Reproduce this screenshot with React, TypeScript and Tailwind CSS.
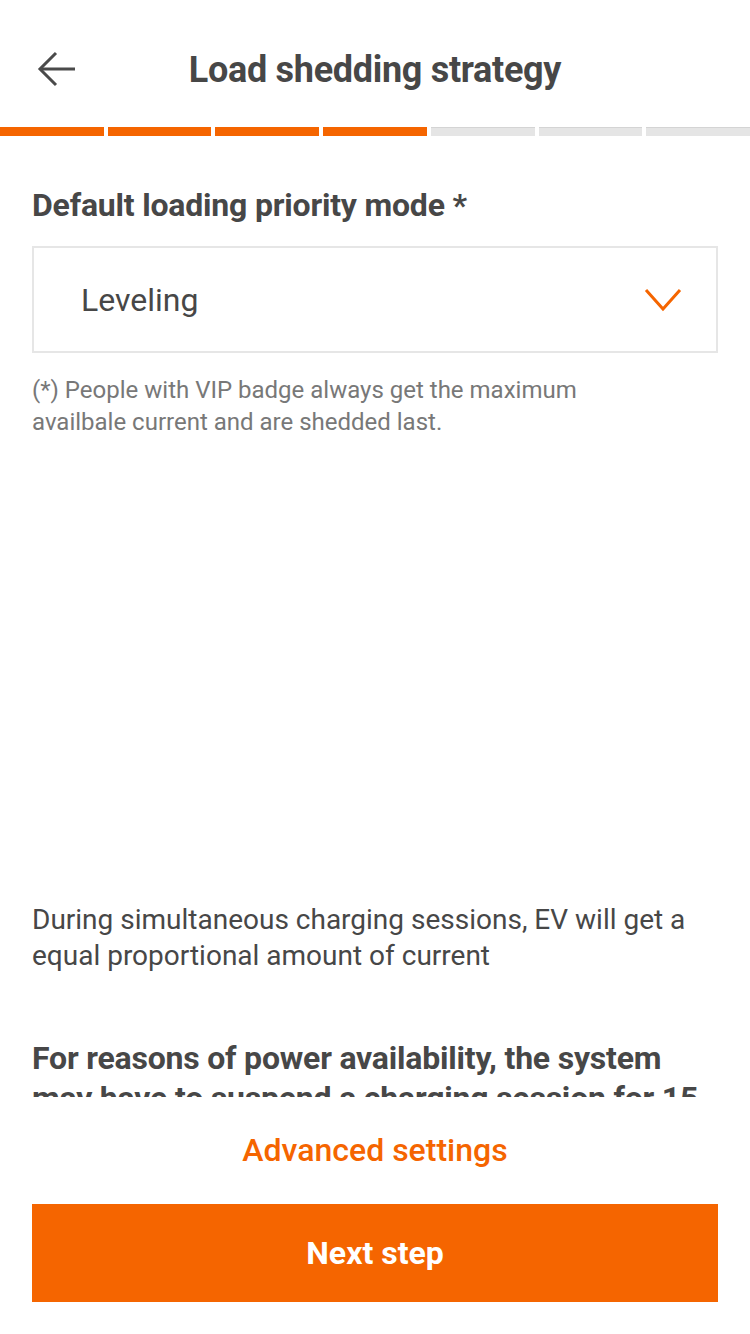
import { useState } from "react";

const steps = [true, true, true, true, false, false, false];

export default function App() {
  const [mode] = useState("Leveling");

  return (
    <div className="flex h-[1334px] w-[750px] flex-col bg-white font-['Roboto',sans-serif] text-[#474747]">
      {/* header */}
      <div className="relative flex h-[127px] shrink-0 items-center justify-center">
        <button className="absolute left-[36px] top-[51px] flex h-[36px] w-[40px] items-center justify-center">
          <svg width="38" height="36" viewBox="0 0 38 36" fill="none" stroke="#4a4a4a" strokeWidth="3">
            <path d="M38 18H4" />
            <path d="M19 2L3 18l16 16" />
          </svg>
        </button>
        <h1 className="mt-[12px] text-[36px] font-bold leading-[44px] tracking-[-0.3px] text-[#474747]">Load shedding strategy</h1>
      </div>

      {/* progress */}
      <div className="flex h-[9px] shrink-0 gap-[4px]">
        {steps.map((done, i) => (
          <div
            key={i}
            className={done ? "flex-1 bg-[#f56500]" : "flex-1 border-t border-[#d4d4d4] bg-[#e5e5e5]"}
          />
        ))}
      </div>

      {/* scrolling content */}
      <div className="flex-1 overflow-hidden px-[32px]">
        <h2 className="mt-[49px] text-[32px] font-bold leading-[40px] tracking-[-0.2px]">Default loading priority mode *</h2>

        <div className="mt-[21px] flex h-[107px] items-center justify-between border-2 border-[#e6e6e6] pl-[47px] pr-[34px]">
          <span className="text-[32px] text-[#474747]">{mode}</span>
          <svg width="38" height="24" viewBox="0 0 38 24" fill="none" stroke="#f56500" strokeWidth="3">
            <path d="M2 2l17 19L36 2" />
          </svg>
        </div>

        <p className="mt-[21px] w-[580px] text-[24px] leading-[32px] text-[#787878]">
          (*) People with VIP badge always get the maximum availbale current and are shedded last.
        </p>

        <p className="mt-[464px] text-[28px] leading-[36px] text-[#474747]">
          During simultaneous charging sessions, EV will get a equal proportional amount of current
        </p>

        <p className="mt-[64px] text-[32px] font-bold leading-[40px] tracking-[-0.2px] text-[#474747]">
          For reasons of power availability, the system may have to suspend a charging session for 15 minutes in order to distribute the current to other users.
        </p>
      </div>

      {/* footer */}
      <div className="flex shrink-0 flex-col items-center px-[32px] pb-[32px]">
        <button className="mt-[34px] text-[32px] font-medium leading-[38px] text-[#f56500]">Advanced settings</button>
        <button className="mt-[35px] flex h-[98px] w-full items-center justify-center bg-[#f56500] text-[32px] font-bold text-white">
          Next step
        </button>
      </div>
    </div>
  );
}
